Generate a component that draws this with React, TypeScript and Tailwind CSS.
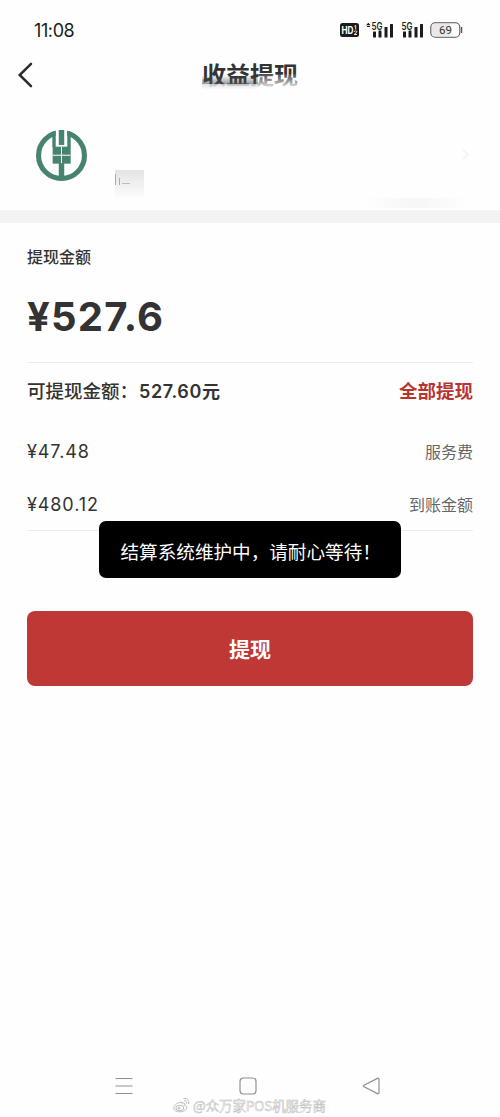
const nums = "font-['Inter','Noto_Sans_CJK_SC',sans-serif]"

const fees = [
  { amount: "¥47.48", label: "服务费" },
  { amount: "¥480.12", label: "到账金额" },
]

function Signal({ roaming }: { roaming?: boolean }) {
  return (
    <svg width="29" height="20" viewBox="0 0 29 20" fill="#1c1c1c">
      {roaming && <path d="M0 5.2 2.3 2.8 4.6 5.2zM1 6h3v1H1z" />}
      <text x="5.5" y="9.5" fontSize="10" fontWeight="600" fontFamily="Inter, sans-serif" textLength="11" lengthAdjust="spacingAndGlyphs">
        5G
      </text>
      <rect x="7" y="11.5" width="3" height="6" rx=".5" />
      <rect x="12.5" y="10.5" width="3" height="7" rx=".5" />
      <rect x="18.5" y="7" width="3" height="10.5" rx=".5" />
      <rect x="24" y="4" width="3" height="13.5" rx=".5" />
    </svg>
  )
}

function StatusBar() {
  return (
    <div className="flex h-[50px] items-start justify-between pt-[21px] pl-[34px]">
      <span className={`${nums} text-[18px] leading-5 tracking-[-0.4px] text-[#1c1c1c]`}>11:08</span>
      <div className="-mt-px flex items-center pr-[36px]">
        <svg width="19" height="14" viewBox="0 0 19 14">
          <rect width="19" height="14" rx="2.5" fill="#1c1c1c" />
          <text x="1.5" y="10.7" fontSize="10" fontWeight="700" fontFamily="Inter, sans-serif" fill="#fff" textLength="12" lengthAdjust="spacingAndGlyphs">
            HD
          </text>
          <path d="M14.4 3.300l1.300-.8v4M14.200 8.800q.3-1 1.400-1t1.200 1q0 .6-2.600 2.700h2.800" fill="none" stroke="#fff" strokeWidth=".9" />
        </svg>
        <div className="ml-[7px] flex gap-[1px]">
          <Signal roaming />
          <Signal />
        </div>
        <svg className="ml-[5px]" width="34" height="16" viewBox="0 0 34 16">
          <rect x=".8" y=".8" width="29" height="14.4" rx="4.5" fill="#fff" stroke="#555" strokeWidth="1.1" />
          <path d="M5 2h15v12H5a3 3 0 0 1-3-3V5a3 3 0 0 1 3-3z" fill="#e8e8e8" />
          <path d="M31.6 5v6" stroke="#555" strokeWidth="1.3" />
          <text x="15.4" y="12" textAnchor="middle" fontSize="11.5" fill="#333" fontFamily="Roboto, sans-serif">
            69
          </text>
        </svg>
      </div>
    </div>
  )
}

function BankLogo() {
  return (
    <svg width="51" height="51" viewBox="0 0 150 150">
      <circle cx="75" cy="75" r="67.5" fill="none" stroke="#478370" strokeWidth="15" />
      <path d="M58 0h34v50H58z" fill="#fefefe" />
      <path d="M48 6l10-4v49H48zM102 6L92 2v49h10z" fill="#478370" />
      <path d="M67 0h16v44H67z" fill="#478370" />
      <path d="M49 49h53v50H49z" fill="#478370" />
      <path d="M67 97h16v46H67z" fill="#478370" />
      <path d="M75 50v48M50 74.5h51" stroke="#fefefe" strokeWidth="3" />
    </svg>
  )
}

export default function App() {
  return (
    <main className="relative flex h-[1117px] w-[500px] flex-col overflow-hidden bg-[#fefefe] font-['Noto_Sans_CJK_SC',sans-serif] text-[#333]">
      <StatusBar />

      <header className="grid h-[50px] grid-cols-[100px_1fr_100px] items-center">
        <svg className="ml-[17px]" width="17" height="28" viewBox="0 0 17 28" fill="none" stroke="#2b2b2d" strokeWidth="2.5">
          <path d="M14 2.8 2.7 14 14 25.2" strokeLinecap="round" />
        </svg>
        <h1 className="relative -mt-[2px] justify-self-center text-[24px] leading-[36px] font-bold">
          收益提现
          {/* smudge over the lower half of the title */}
          <span className="absolute top-[19px] left-0 h-[9px] w-[56px] bg-linear-to-b from-transparent to-[#555]/60" />
          <span className="absolute top-[18px] left-[56px] h-[14px] w-[42px] bg-linear-to-b from-white/10 to-white/90" />
          <span className="absolute top-[28px] left-0 h-[6px] w-[56px] bg-linear-to-b from-[#ddd]/80 to-white" />
        </h1>
      </header>

      <section className="flex h-[110px] items-start justify-between pt-[30px] pr-[31px] pl-[36px]">
        <div className="flex">
          <BankLogo />
          <div className="mt-[40px] ml-[28px] flex h-7 w-[29px] items-start bg-linear-to-b from-[#e4e4e4] to-[#fcfcfc]">
            <span className="mt-1 h-[11px] w-px bg-[#aaa]" />
            <span className="mt-2 ml-[3px] h-[7px] w-px bg-[#aaa]" />
            <span className="mt-[13px] ml-[2px] h-px w-2 bg-[#bbb]" />
          </div>
        </div>
        <div className="flex h-[78px] flex-col items-end justify-between">
          <svg className="mt-[18px]" width="7" height="13" viewBox="0 0 7 13" fill="none" stroke="#efefef" strokeWidth="1.2">
            <path d="M1 2l5 4.5L1 11" />
          </svg>
          <span className="h-[10px] w-[105px] bg-linear-to-r from-transparent via-[#f6f6f6] to-transparent" />
        </div>
      </section>
      <div className="h-[13px] bg-[#f3f3f3]" />

      <section className="flex flex-col px-[27px]">
        <p className="mt-[21px] text-[16px] leading-6 font-medium">提现金额</p>
        <p className={`${nums} mt-[23px] text-[40px] leading-[52px] font-bold tracking-[1.2px]`}>¥527.6</p>
        <div className="mt-[19px] h-px bg-[#ebebeb]" />
        <div className="flex h-14 items-center justify-between text-[18px] font-medium">
          <p className="flex items-center">
            <span className="w-[112px] text-[18.5px]">可提现金额：</span>
            <span className={`${nums} font-semibold tracking-[0.6px]`}>527.60元</span>
          </p>
          <span className="text-[18.5px] font-bold text-[#b93430]">全部提现</span>
        </div>
        <div className="flex h-[111px] flex-col pt-[5px]">
          {fees.map((fee) => (
            <div key={fee.label} className="flex h-[53px] items-center justify-between">
              <span className={`${nums} mt-px text-[18px] tracking-[0.9px]`}>{fee.amount}</span>
              <span className="text-[16px] text-[#666]">{fee.label}</span>
            </div>
          ))}
        </div>
        <div className="h-px bg-[#ebebeb]" />
        <button className="mt-20 h-[75px] rounded-[8px] bg-[#be3835] text-[21px] font-bold text-white">提现</button>
      </section>

      <nav className="mt-auto flex h-[62px] items-center justify-between pr-[120px] pl-[115px] text-[#909090]">
        <svg width="18" height="18" viewBox="0 0 18 18" fill="none" stroke="currentColor" strokeWidth="1.2">
          <path d="M.5 1.5h17M.5 9h17M.5 16.5h17" />
        </svg>
        <svg width="18" height="18" viewBox="0 0 18 18" fill="none" stroke="currentColor" strokeWidth="1.2">
          <rect x="1" y="1" width="16" height="16" rx="3.5" />
        </svg>
        <svg width="18" height="18" viewBox="0 0 18 18" fill="none" stroke="currentColor" strokeWidth="1.2">
          <path d="M15.5 1.4 2 8.2q-1.2.8 0 1.6l13.5 6.8q1.5.4 1.5-1.1V2.5q0-1.5-1.5-1.1z" />
        </svg>
      </nav>

      <div className="absolute top-[521px] left-[99px] flex h-[57px] w-[302px] items-center rounded-[7px] bg-black pt-[2px] pl-[21.5px] text-[18.6px] whitespace-nowrap text-white">
        结算系统维护中，请耐心等待！
      </div>

      <div className="absolute top-[1096px] left-[173px] flex h-[18px] items-center gap-[3px] text-[13.4px] leading-[18px] whitespace-nowrap text-white [-webkit-text-stroke:0.5px_#bbb]">
        <svg width="17" height="16" viewBox="0 0 17 16" fill="none" stroke="#bcbcbc" strokeWidth="1">
          <path d="M7 5.5C3 6 .8 9 .8 11.2c0 2.5 3 3.6 6 3.6 4 0 7-2 7-4.4 0-1.5-1.3-2-2.3-2.2.8-2-.5-3-3-2 .3-1.2-.2-1.8-1.5-.7z" />
          <ellipse cx="6.8" cy="11" rx="4" ry="2.7" />
          <circle cx="6" cy="11.2" r="1" />
          <path d="M10.5 1.5c4-.8 6 2.3 5 5.5M11 3.8c2-.3 3 1 2.5 2.7" />
        </svg>
        @众万家POS机服务商
      </div>
    </main>
  )
}
